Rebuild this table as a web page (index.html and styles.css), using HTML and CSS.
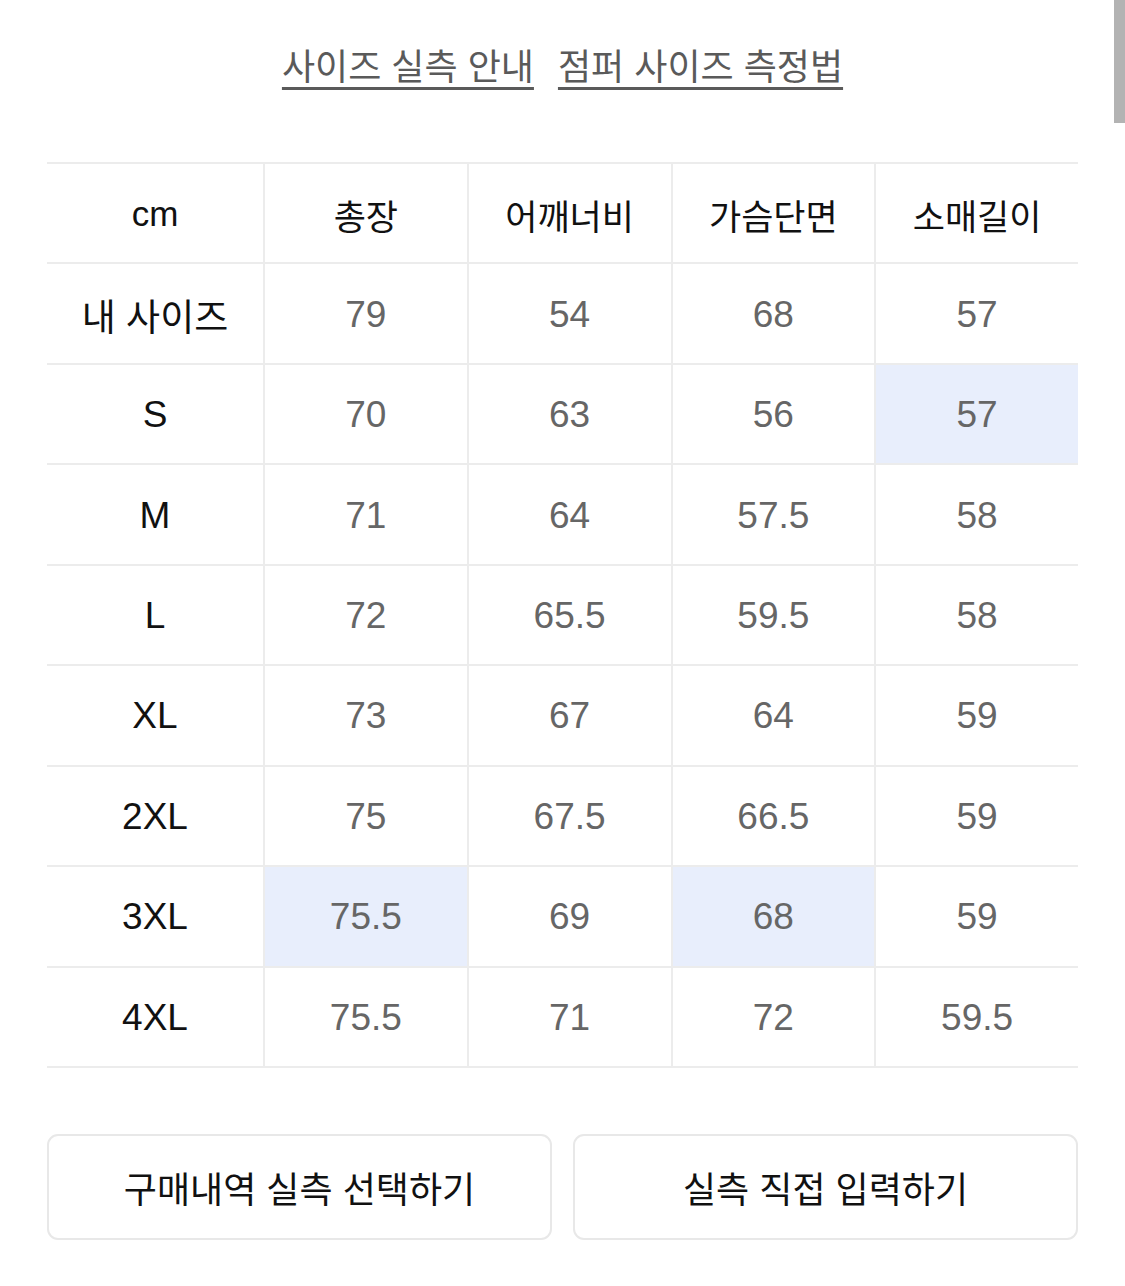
FILE: index.html
```html
<!DOCTYPE html>
<html lang="ko">
<head>
<meta charset="utf-8">
<link rel="stylesheet" href="styles.css">
</head>
<body>
<div class="page">
  <div class="links">
    <a class="link" href="#">사이즈 실측 안내</a>
    <a class="link" href="#">점퍼 사이즈 측정법</a>
  </div>
  <div class="table">
    <div class="cell head first">cm</div>
    <div class="cell head">총장</div>
    <div class="cell head">어깨너비</div>
    <div class="cell head">가슴단면</div>
    <div class="cell head">소매길이</div>

    <div class="cell label first">내 사이즈</div>
    <div class="cell">79</div><div class="cell">54</div><div class="cell">68</div><div class="cell">57</div>

    <div class="cell label first">S</div>
    <div class="cell">70</div><div class="cell">63</div><div class="cell">56</div><div class="cell hl">57</div>

    <div class="cell label first">M</div>
    <div class="cell">71</div><div class="cell">64</div><div class="cell">57.5</div><div class="cell">58</div>

    <div class="cell label first">L</div>
    <div class="cell">72</div><div class="cell">65.5</div><div class="cell">59.5</div><div class="cell">58</div>

    <div class="cell label first">XL</div>
    <div class="cell">73</div><div class="cell">67</div><div class="cell">64</div><div class="cell">59</div>

    <div class="cell label first">2XL</div>
    <div class="cell">75</div><div class="cell">67.5</div><div class="cell">66.5</div><div class="cell">59</div>

    <div class="cell label first">3XL</div>
    <div class="cell hl">75.5</div><div class="cell">69</div><div class="cell hl">68</div><div class="cell">59</div>

    <div class="cell label first">4XL</div>
    <div class="cell">75.5</div><div class="cell">71</div><div class="cell">72</div><div class="cell">59.5</div>
  </div>
  <div class="buttons">
    <button class="btn">구매내역 실측 선택하기</button>
    <button class="btn">실측 직접 입력하기</button>
  </div>
</div>
<div class="scrollbar"></div>
</body>
</html>
```

FILE: styles.css
```css
html, body {
  margin: 0;
  padding: 0;
  background: #ffffff;
}
body {
  font-family: "Liberation Sans", "Noto Sans CJK KR", sans-serif;
  width: 1125px;
  height: 1286px;
  overflow: hidden;
  position: relative;
}
.page {
  padding: 0 47px 0 47px;
}
.links {
  display: flex;
  justify-content: center;
  gap: 24px;
  padding-top: 38px;
  height: 162px;
  box-sizing: border-box;
  padding-left: 0;
}
.link {
  font-family: "Noto Sans CJK KR", sans-serif;
  font-size: 36px;
  line-height: 52px;
  color: #5a5a5a;
  text-decoration: underline;
  text-decoration-thickness: 3px;
  text-underline-offset: 7px;
  text-decoration-color: #5a5a5a;
}
.table {
  width: 1031px;
  display: grid;
  grid-template-columns: 216px repeat(4, 1fr);
  grid-auto-rows: 100.44px;
  border-top: 2px solid #ececec;
}
.cell {
  display: flex;
  align-items: center;
  justify-content: center;
  border-bottom: 2px solid #ececec;
  border-left: 2px solid #ececec;
  font-size: 37px;
  color: #666666;
  box-sizing: border-box;
  padding-top: 2px;
}
.cell.first {
  border-left: none;
}
.cell.head, .cell.label {
  color: #111111;
}
.cell.head {
  font-size: 35px;
}
.cell.hl {
  background: #e8eefc;
}
.buttons {
  display: flex;
  gap: 21px;
  margin-top: 66px;
  width: 1031px;
}
.btn {
  flex: 1;
  height: 106px;
  border: 2px solid #e8e8e8;
  border-radius: 11px;
  background: #ffffff;
  font-family: "Noto Sans CJK KR", sans-serif;
  font-size: 36px;
  color: #111111;
  padding: 0;
}
.scrollbar {
  position: absolute;
  top: 0;
  right: 0;
  width: 11px;
  height: 123px;
  background: #b3b3b3;
}
```
